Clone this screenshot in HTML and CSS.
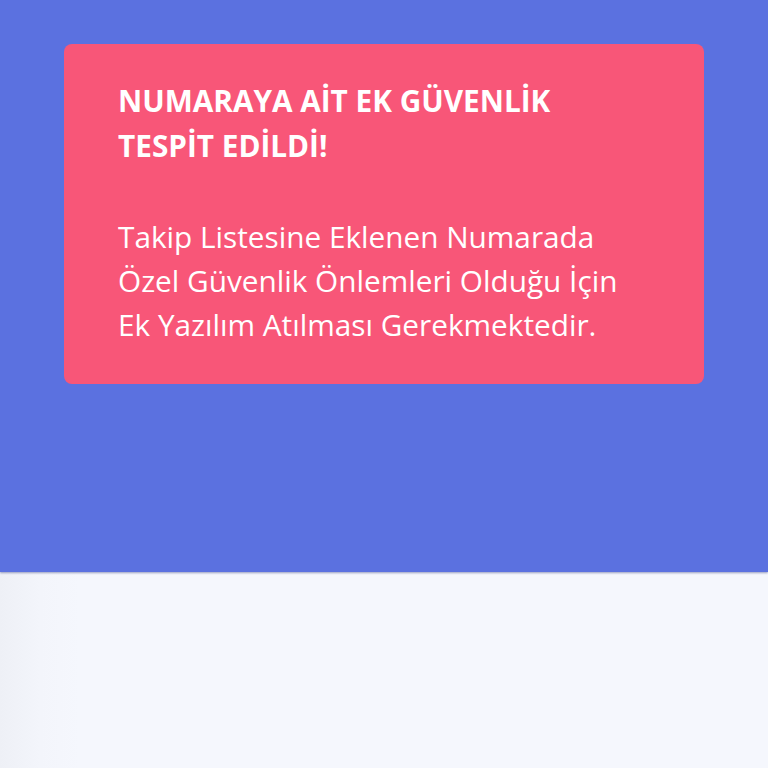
FILE: index.html
```html
<!DOCTYPE html>
<html lang="tr">
<head>
<meta charset="utf-8">
<title>Uyarı</title>
<link rel="stylesheet" href="styles.css">
</head>
<body>
<section class="hero">
  <div class="alert">
    <h2 class="alert-title">NUMARAYA AİT EK GÜVENLİK<br>TESPİT EDİLDİ!</h2>
    <p class="alert-text">Takip Listesine Eklenen Numarada<br>Özel Güvenlik Önlemleri Olduğu İçin<br>Ek Yazılım Atılması Gerekmektedir.</p>
  </div>
</section>
<main class="content"></main>
</body>
</html>
```

FILE: styles.css
```css
* { box-sizing: border-box; }

html, body {
  margin: 0;
  height: 100%;
}

body {
  font-family: "Open Sans", "Noto Sans", sans-serif;
  background: #f5f7fd;
  display: flex;
  flex-direction: column;
}

.hero {
  background: #5b71e0;
  height: 572px;
  padding: 44px 64px 0;
  box-shadow: 0 1px 2px rgba(40, 50, 120, 0.45);
  position: relative;
  z-index: 1;
}

.alert {
  background: #f85678;
  border-radius: 8px;
  padding: 34px 54px 37px;
  color: #ffffff;
}

.alert-title {
  margin: 0;
  font-size: 29.75px;
  font-weight: 700;
  line-height: 45px;
}

.alert-text {
  margin: 47px 0 0;
  font-size: 29.75px;
  font-weight: 400;
  line-height: 44px;
}

.content {
  flex: 1;
  background: linear-gradient(to right, #eef0f6 0, #f3f5fb 40px, #f5f7fd 80px);
}
```
